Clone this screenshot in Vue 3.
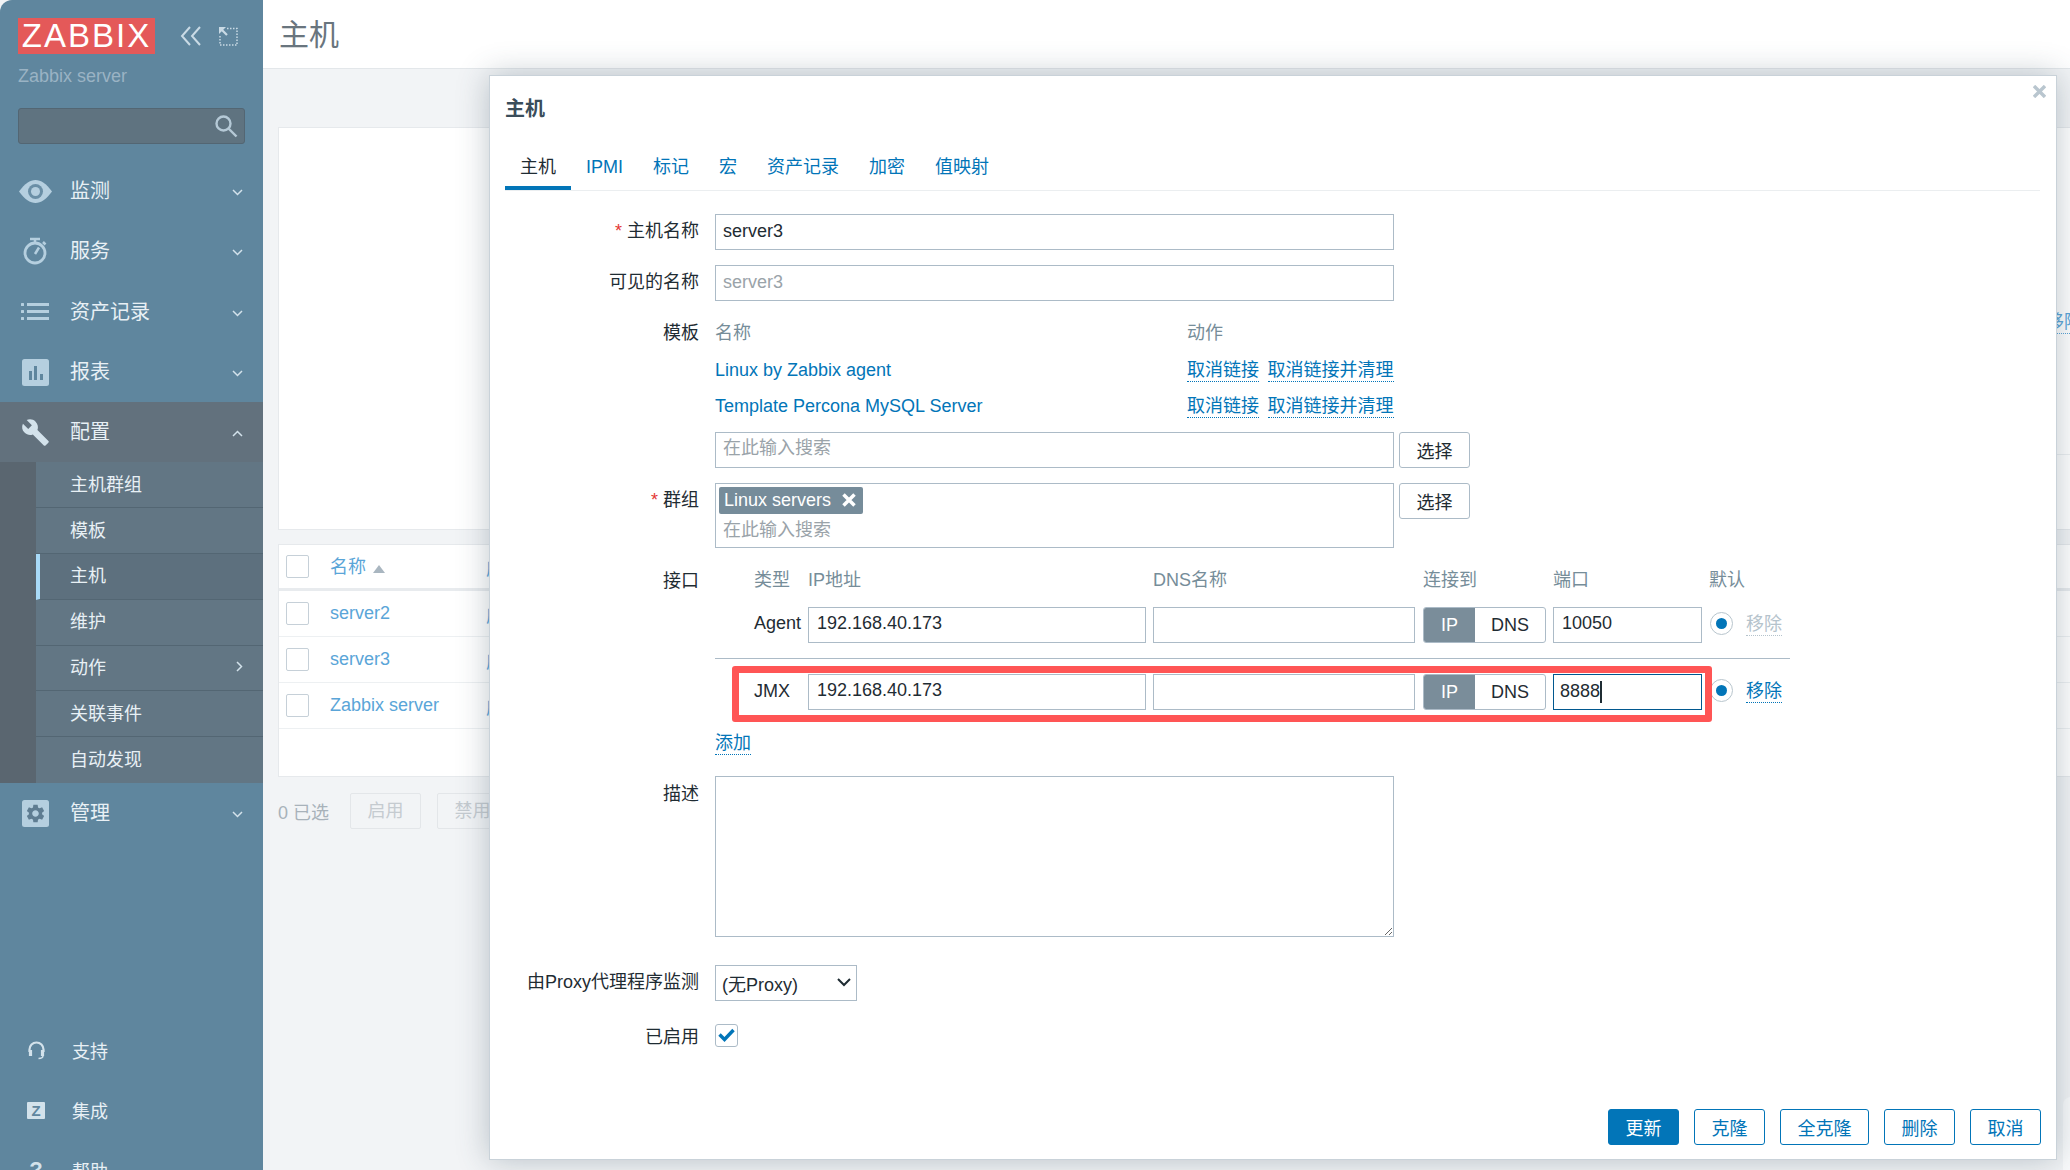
<script setup>
const menu = [
  { name: '监测', icon: 'eye' },
  { name: '服务', icon: 'watch' },
  { name: '资产记录', icon: 'list' },
  { name: '报表', icon: 'bars' },
  { name: '配置', icon: 'wrench', open: true },
]
const subMenu = [
  { name: '主机群组' },
  { name: '模板' },
  { name: '主机', active: true },
  { name: '维护' },
  { name: '动作', more: true },
  { name: '关联事件' },
  { name: '自动发现' },
]
const tabs = ['主机', 'IPMI', '标记', '宏', '资产记录', '加密', '值映射']
const hosts = ['server2', 'server3', 'Zabbix server']
const templates = ['Linux by Zabbix agent', 'Template Percona MySQL Server']
const gearPath = 'M19.14 12.94c.04-.3.06-.61.06-.94 0-.32-.02-.64-.07-.94l2.03-1.58c.18-.14.23-.41.12-.61l-1.92-3.32c-.12-.22-.37-.29-.59-.22l-2.39.96c-.5-.38-1.03-.7-1.62-.94l-.36-2.54c-.04-.24-.24-.41-.48-.41h-3.84c-.24 0-.43.17-.47.41l-.36 2.54c-.59.24-1.13.57-1.62.94l-2.39-.96c-.22-.08-.47 0-.59.22L2.74 8.87c-.12.21-.08.47.12.61l2.03 1.58c-.05.3-.09.63-.09.94s.02.64.07.94l-2.03 1.58c-.18.14-.23.41-.12.61l1.92 3.32c.12.22.37.29.59.22l2.39-.96c.5.38 1.03.7 1.62.94l.36 2.54c.05.24.24.41.48.41h3.84c.24 0 .44-.17.47-.41l.36-2.54c.59-.24 1.13-.56 1.62-.94l2.39.96c.22.08.47 0 .59-.22l1.92-3.32c.12-.22.07-.47-.12-.61l-2.01-1.58zM12 15.6c-1.98 0-3.6-1.62-3.6-3.6s1.62-3.6 3.6-3.6 3.6 1.62 3.6 3.6-1.62 3.6-3.6 3.6z'
const wrenchPath = 'M22.7 19l-9.1-9.1c.9-2.3.4-5-1.5-6.9-2-2-5-2.4-7.4-1.3L9 6 6 9 1.6 4.7C.4 7.1.9 10.1 2.9 12.1c1.9 1.9 4.6 2.4 6.9 1.5l9.1 9.1c.4.4 1 .4 1.4 0l2.3-2.3c.5-.4.5-1.1.1-1.4z'
</script>

<template>
  <div class="page">
    <aside class="sidebar">
      <div class="brand">
        <div class="logo">ZABBIX</div>
        <svg class="brand-icon first" width="22" height="20" viewBox="0 0 22 20" fill="none" stroke="#c9dae5" stroke-width="2">
          <path d="M10 1 2 10l8 9M20 1l-8 9 8 9" />
        </svg>
        <svg class="brand-icon" width="19" height="19" viewBox="0 0 19 19" fill="none" stroke="#c9dae5">
          <path d="M8 1.500h10v16.500H1V9" stroke-width="1.500" stroke-dasharray="1.500 1.500" />
          <path d="M0 0h7L0 7z" fill="#c9dae5" stroke="none" />
          <path d="M2 2l6 6" stroke-width="2.200" />
        </svg>
      </div>
      <div class="server">Zabbix server</div>
      <div class="search">
        <svg width="24" height="24" viewBox="0 0 24 24" fill="none" stroke="#b5c9d6" stroke-width="2.400">
          <circle cx="9.500" cy="9.500" r="7" />
          <path d="M14.500 14.500 22.500 22.500" />
        </svg>
      </div>

      <nav class="menu">
        <template v-for="item in menu" :key="item.name">
          <div class="menu-row" :class="{ open: item.open }">
            <span class="menu-icon">
              <svg v-if="item.icon === 'eye'" width="33" height="23" viewBox="0 0 33 23">
                <path d="M0 11.500C6 3.500 11 0 16.500 0S27 3.500 33 11.500C27 19.500 22 23 16.500 23S6 19.500 0 11.500z" fill="#b5cfdf" />
                <circle cx="16.500" cy="11.500" r="7.500" fill="#6a8fa6" />
                <circle cx="16.500" cy="11.500" r="4.500" fill="#b5cfdf" />
              </svg>
              <svg v-else-if="item.icon === 'watch'" width="24" height="28" viewBox="0 0 24 28" fill="none" stroke="#b5cfdf">
                <path d="M7 2h10M12 2v4" stroke-width="2.500" />
                <circle cx="12" cy="16" r="10" stroke-width="2.800" />
                <path d="M12 17l4-6.500M20 5l2.500 2.500" stroke-width="2.500" />
              </svg>
              <svg v-else-if="item.icon === 'list'" width="28" height="17" viewBox="0 0 28 17" fill="#b5cfdf">
                <rect width="3" height="3" rx=".5" />
                <rect y="7" width="3" height="3" rx=".5" />
                <rect y="14" width="3" height="3" rx=".5" />
                <rect x="6" width="22" height="3" />
                <rect x="6" y="7" width="22" height="3" />
                <rect x="6" y="14" width="22" height="3" />
              </svg>
              <svg v-else-if="item.icon === 'bars'" width="27" height="27" viewBox="0 0 27 27">
                <rect width="27" height="27" rx="2.500" fill="#b5cfdf" />
                <path d="M7 12h3v9H7zM12 7h3v14h-3zM18 15h3v6h-3z" fill="#5f869e" />
              </svg>
              <svg v-else width="29" height="29" viewBox="0 0 24 24" fill="#d3e2eb">
                <path :d="wrenchPath" />
              </svg>
            </span>
            <span class="menu-name">{{ item.name }}</span>
            <svg class="chevron" width="11" height="7" viewBox="0 0 11 7" fill="none" stroke="#d3e2eb" stroke-width="1.500">
              <path :d="item.open ? 'M1 6l4.500-4.500L10 6' : 'M1 1l4.500 4.500L10 1'" />
            </svg>
          </div>
        </template>
        <div class="sub-menu">
          <div class="sub-list">
            <div v-for="sub in subMenu" :key="sub.name" class="sub-row" :class="{ active: sub.active }">
              <span>{{ sub.name }}</span>
              <svg v-if="sub.more" width="7" height="11" viewBox="0 0 7 11" fill="none" stroke="#d3e2eb" stroke-width="1.500">
                <path d="M1 1l4.500 4.500L1 10" />
              </svg>
            </div>
          </div>
        </div>
        <div class="menu-row">
          <span class="menu-icon">
            <svg width="27" height="27" viewBox="0 0 27 27">
              <rect width="27" height="27" rx="2.500" fill="#b5cfdf" />
              <svg x="2.500" y="2.500" width="22" height="22" viewBox="0 0 24 24">
                <path :d="gearPath" fill="#5f7d92" />
              </svg>
            </svg>
          </span>
          <span class="menu-name">管理</span>
          <svg class="chevron" width="11" height="7" viewBox="0 0 11 7" fill="none" stroke="#d3e2eb" stroke-width="1.500">
            <path d="M1 1l4.500 4.500L10 1" />
          </svg>
        </div>
      </nav>

      <div class="foot">
        <div class="foot-row">
          <span class="menu-icon foot-icon">
            <svg width="17" height="19" viewBox="0 0 17 19" fill="none" stroke="#d3e2eb" stroke-width="2.200">
              <path d="M1.500 11V8.500a7 7 0 0 1 14 0V11" />
              <path d="M1.500 9.500h2v5h-2zM13.500 9.500h2v5h-2z" fill="#d3e2eb" stroke-width="1.200" />
              <path d="M15 14.500c0 2.500-2 3-4.500 3" stroke-width="1.500" />
            </svg>
          </span>
          <span>支持</span>
        </div>
        <div class="foot-row">
          <span class="menu-icon foot-icon"><span class="z-box">Z</span></span>
          <span>集成</span>
        </div>
        <div class="foot-row">
          <span class="menu-icon foot-icon help">?</span>
          <span>帮助</span>
        </div>
      </div>
    </aside>

    <main class="main">
      <header class="top-bar">主机</header>
      <div class="content">
        <section class="filter-panel">
          <a class="bg-link filter-link">移除</a>
          <div class="filter-line"></div>
        </section>
        <section class="table-panel">
          <div class="table-row table-head">
            <span class="box"></span>
            <span class="col-name">名称 <i class="sort"></i></span>
            <span class="col-next">应用集</span>
          </div>
          <div v-for="host in hosts" :key="host" class="table-row">
            <span class="box"></span>
            <span class="col-name">{{ host }}</span>
            <span class="col-next">应用集</span>
          </div>
        </section>
        <div class="mass-actions">
          <span class="selected">0 已选</span>
          <span class="mass-btn">启用</span>
          <span class="mass-btn">禁用</span>
        </div>
      </div>
    </main>

    <div class="corner-piece"></div>

    <section class="dialog">
      <svg class="close" width="13" height="13" viewBox="0 0 13 13" stroke="#b9c6cf" stroke-width="3.400">
        <path d="M1 1l11 11M12 1 1 12" />
      </svg>
      <h2 class="dialog-title">主机</h2>

      <div class="tabs">
        <span v-for="(tab, i) in tabs" :key="tab" class="tab" :class="{ current: i === 0 }">{{ tab }}</span>
      </div>

      <form class="form" @submit.prevent>
        <div class="row">
          <label><i>*</i> 主机名称</label>
          <input class="field wide" value="server3" />
        </div>
        <div class="row">
          <label>可见的名称</label>
          <input class="field wide" placeholder="server3" />
        </div>
        <div class="row">
          <label>模板</label>
          <div>
            <div class="tpl-row tpl-head">
              <span>名称</span>
              <span>动作</span>
            </div>
            <div v-for="tpl in templates" :key="tpl" class="tpl-row">
              <span class="plain-link">{{ tpl }}</span>
              <span class="tpl-actions">
                <a class="link">取消链接</a>
                <a class="link">取消链接并清理</a>
              </span>
            </div>
            <div class="with-btn tpl-search">
              <input class="field wide" placeholder="在此输入搜索" />
              <button type="button" class="plain-btn">选择</button>
            </div>
          </div>
        </div>
        <div class="row">
          <label><i>*</i> 群组</label>
          <div class="with-btn">
            <div class="multi">
              <span class="tag">Linux servers
                <svg width="14" height="14" viewBox="0 0 14 14" stroke="#fff" stroke-width="3.500">
                  <path d="M1.500 1.500l11 11M12.500 1.500l-11 11" />
                </svg>
              </span>
              <span class="multi-hint">在此输入搜索</span>
            </div>
            <button type="button" class="plain-btn">选择</button>
          </div>
        </div>
        <div class="row row-iface">
          <label>接口</label>
          <div>
            <div class="iface iface-head">
              <span>类型</span>
              <span>IP地址</span>
              <span>DNS名称</span>
              <span>连接到</span>
              <span>端口</span>
              <span>默认</span>
            </div>
            <div class="iface iface-agent">
              <span class="iface-type">Agent</span>
              <input class="field" value="192.168.40.173" />
              <input class="field" />
              <div class="toggle"><span class="on">IP</span><span>DNS</span></div>
              <input class="field" value="10050" />
              <span class="radio"></span>
              <a class="link muted">移除</a>
            </div>
            <div class="iface-line"></div>
            <div class="iface iface-jmx">
              <span class="iface-type">JMX</span>
              <input class="field" value="192.168.40.173" />
              <input class="field" />
              <div class="toggle"><span class="on">IP</span><span>DNS</span></div>
              <div class="field port-focus">8888<b class="caret"></b></div>
              <span class="radio"></span>
              <a class="link">移除</a>
              <div class="highlight"></div>
            </div>
            <a class="link add">添加</a>
          </div>
        </div>
        <div class="row row-desc">
          <label>描述</label>
          <textarea class="field wide area"></textarea>
        </div>
        <div class="row row-proxy">
          <label>由Proxy代理程序监测</label>
          <div class="proxy-wrap">
            <select class="proxy">
              <option>(无Proxy)</option>
            </select>
            <svg class="proxy-arrow" width="14" height="9" viewBox="0 0 14 9" fill="none" stroke="#1f2c33" stroke-width="2">
              <path d="M1 1l6 6 6-6" />
            </svg>
          </div>
        </div>
        <div class="row">
          <label class="label-check">已启用</label>
          <span class="check">
            <svg width="17" height="14" viewBox="0 0 17 14" fill="none" stroke="#0275b8" stroke-width="3.400">
              <path d="M1.500 6.500l5 5L15.500 2" />
            </svg>
          </span>
        </div>
      </form>

      <footer class="actions">
        <button type="button" class="act primary">更新</button>
        <button type="button" class="act">克隆</button>
        <button type="button" class="act act-long">全克隆</button>
        <button type="button" class="act">删除</button>
        <button type="button" class="act">取消</button>
      </footer>
    </section>
  </div>
</template>

<style>
html,
body {
  margin: 0;
  background: #fff;
}
</style>

<style scoped>
.page {
  position: relative;
  display: flex;
  width: 2070px;
  height: 1170px;
  overflow: hidden;
  font-family: "Liberation Sans", "Noto Sans CJK SC", sans-serif;
  font-size: 18px;
  color: #1f2c33;
  background: #f2f4f6;
}

/* sidebar */
.sidebar {
  flex: 0 0 263px;
  height: 1170px;
  overflow: hidden;
  background: #5f869e;
  border-top-left-radius: 12px;
  color: #e8f0f5;
}

.brand {
  display: flex;
  align-items: center;
  padding: 18px 0 0 18px;
  height: 36px;
}

.logo {
  width: 137px;
  height: 36px;
  background: #e45959;
  color: #fff;
  font-size: 33px;
  line-height: 36px;
  text-align: center;
  letter-spacing: 2px;
}

.brand-icon {
  margin-left: 17px;
}

.brand-icon.first {
  margin-left: 25px;
}

.server {
  padding: 10px 0 0 18px;
  height: 24px;
  line-height: 24px;
  color: #9ab3c4;
}

.search {
  box-sizing: border-box;
  display: flex;
  align-items: center;
  justify-content: flex-end;
  margin: 20px 18px 0;
  height: 36px;
  padding-right: 6px;
  background: #5f7380;
  border: 1px solid #536673;
  border-radius: 3px;
}

.menu {
  margin-top: 17px;
}

.menu-row {
  display: flex;
  align-items: center;
  height: 60.300px;
  font-size: 20px;
}

.menu-row.open {
  background: #62717d;
}

.menu-icon {
  flex: 0 0 70px;
  display: flex;
  align-items: center;
  justify-content: center;
  padding-right: 0;
  box-sizing: border-box;
}

.foot-icon {
  flex-basis: 72px;
}

.menu-name {
  flex: 1;
  line-height: 24px;
}

.chevron {
  margin: 3px 20px 0 0;
}

.sub-menu {
  padding-left: 36px;
  background: #5a6670;
}

.sub-list {
  background: #627684;
}

.sub-row {
  box-sizing: border-box;
  display: flex;
  align-items: center;
  justify-content: space-between;
  height: 45.800px;
  padding: 0 20px 4px 34px;
  border-bottom: 1px solid #536673;
}

.sub-row:last-child {
  border-bottom: 0;
}

.sub-row.active {
  background: #5d707e;
  padding-left: 30px;
  border-left: 4px solid #a8daf8;
}

.foot {
  margin-top: 177px;
}

.foot-row {
  display: flex;
  align-items: center;
  height: 60px;
}

.z-box {
  width: 18px;
  height: 17px;
  border-radius: 1px;
  background: #d3e2eb;
  color: #5f869e;
  font-size: 15px;
  font-weight: bold;
  line-height: 17px;
  text-align: center;
}

.help {
  font-size: 22px;
  font-weight: bold;
  color: #d3e2eb;
}

/* page behind the dialog */
.main {
  flex: 1;
  min-width: 0;
}

.top-bar {
  box-sizing: border-box;
  height: 69px;
  padding: 0 16px;
  background: #fff;
  border-bottom: 1px solid #e3e7ea;
  font-size: 30px;
  line-height: 70px;
  color: #69757e;
}

.content {
  padding: 58px 0 0 15px;
  width: 1900px;
}

.filter-panel {
  box-sizing: border-box;
  height: 403px;
  padding: 183px 0 0 1767px;
  background: #fff;
  border: 1px solid #e6e9ec;
}

.bg-link,
.col-name,
.col-next {
  color: #5aa5d8;
}

.filter-link {
  display: inline-block;
  line-height: 22px;
  border-bottom: 1px dotted #5aa5d8;
}

/* only its end shows to the right of the dialog */
.filter-line {
  margin: 120px 0 0 0;
  border-top: 1px solid #eceff1;
}

.table-panel {
  box-sizing: border-box;
  height: 233px;
  margin-top: 14px;
  background: #fff;
  border: 1px solid #e6e9ec;
}

.table-row {
  box-sizing: border-box;
  display: flex;
  align-items: center;
  height: 46px;
  padding-left: 7px;
  border-bottom: 1px solid #edf0f2;
}

.table-head {
  height: 46px;
  border-bottom: 3px solid #e8ebee;
}

.table-head .col-name {
  margin-top: -3px;
}

.box {
  box-sizing: border-box;
  flex: 0 0 23px;
  height: 23px;
  background: #fff;
  border: 1px solid #c6d0d8;
  border-radius: 2px;
}

.col-name {
  flex: 0 0 156px;
  margin-left: 21px;
}

.col-next {
  white-space: nowrap;
}

.sort {
  display: inline-block;
  margin-left: 2px;
  border: 6px solid transparent;
  border-top: 0;
  border-bottom: 8px solid #a9b6c0;
}

.mass-actions {
  display: flex;
  align-items: center;
  gap: 16px;
  margin-top: 16px;
  color: #a8b2ba;
}

.selected {
  width: 56px;
}

.mass-btn {
  box-sizing: border-box;
  width: 71px;
  height: 36px;
  line-height: 34px;
  text-align: center;
  color: #c5cbd0;
  border: 1px solid #e3e6e9;
  border-radius: 2px;
}

.corner-piece {
  position: absolute;
  left: 2063px;
  top: 1097px;
  width: 20px;
  height: 80px;
  background: #fafbfc;
  border-top-left-radius: 8px;
}

/* dialog */
.dialog {
  position: absolute;
  left: 489px;
  top: 75px;
  box-sizing: border-box;
  display: flex;
  flex-direction: column;
  width: 1568px;
  height: 1085px;
  background: #fff;
  border: 1px solid #c9d2d9;
  box-shadow: 0 0 30px rgba(60, 80, 95, 0.32);
}

.close {
  position: absolute;
  right: 10px;
  top: 9px;
}

.dialog-title {
  margin: 0;
  height: 64px;
  padding-left: 15px;
  font-size: 20px;
  font-weight: bold;
  line-height: 66px;
  color: #3a4d5a;
}

.tabs {
  display: flex;
  margin: 0 16px 0 15px;
  border-bottom: 1px solid #ebeef0;
}

.tab {
  box-sizing: border-box;
  height: 50px;
  padding: 15px 15px 0;
  line-height: 24px;
  color: #0275b8;
}

.tab.current {
  color: #1f2c33;
  border-bottom: 4px solid #0275b8;
}

.form {
  padding-top: 23px;
}

.row {
  display: grid;
  grid-template-columns: 209px 1fr;
  column-gap: 16px;
  margin-bottom: 15px;
}

.row > label {
  text-align: right;
  line-height: 34px;
  color: #1f2c33;
  white-space: nowrap;
}

.row > label i {
  font-style: normal;
  color: #e33734;
}

.field {
  box-sizing: border-box;
  width: 100%;
  height: 36px;
  padding: 0 7px 2px;
  background: #fff;
  border: 1px solid #acbbc7;
  border-radius: 0;
  outline: 0;
  font: inherit;
  color: #1f2c33;
}

.field.wide {
  display: block;
  width: 679px;
}

.field::placeholder,
.multi-hint {
  color: #9aa3a9;
  opacity: 1;
}

.tpl-row {
  display: grid;
  grid-template-columns: 472px 1fr;
  align-items: center;
  width: 679px;
  height: 35.800px;
}

.tpl-head {
  align-items: start;
  height: 37px;
  line-height: 35px;
  color: #768d99;
}

.plain-link {
  color: #0275b8;
}

.tpl-actions {
  display: flex;
  gap: 8.500px;
}

.link {
  display: inline-block;
  line-height: 22px;
  color: #0275b8;
  border-bottom: 1px dotted #0275b8;
}

.link.muted {
  color: #b5c3cc;
  border-bottom-color: #b5c3cc;
}

.with-btn {
  display: flex;
  align-items: flex-start;
  gap: 5px;
}

.tpl-search {
  margin-top: 7px;
}

.plain-btn {
  box-sizing: border-box;
  width: 71px;
  height: 36px;
  padding: 0;
  background: #fff;
  border: 1px solid #acbbc7;
  border-radius: 3px;
  font: inherit;
  color: #1f2c33;
}

.multi {
  box-sizing: border-box;
  display: flex;
  flex-direction: column;
  align-items: flex-start;
  width: 679px;
  height: 65px;
  padding: 3px;
  border: 1px solid #acbbc7;
}

.tag {
  box-sizing: border-box;
  display: flex;
  align-items: center;
  gap: 11px;
  width: 144px;
  height: 27px;
  padding-left: 5px;
  background: #768c9a;
  border-radius: 2px;
  color: #fff;
}

.multi-hint {
  padding: 4px 4px 0;
  line-height: 24px;
}

.iface {
  display: grid;
  grid-template-columns: 47px 338px 262px 124px 149px 30px auto;
  column-gap: 7px;
  align-items: center;
  position: relative;
  padding-left: 39px;
  height: 36px;
}

.iface .field {
  padding-left: 8px;
}

.iface .toggle {
  margin-left: 1px;
}

.iface-head {
  align-items: start;
  margin-bottom: 8px;
  line-height: 34px;
  white-space: nowrap;
  color: #768d99;
}

.iface-head span:nth-child(4) {
  margin-left: 1px;
}

.iface-type {
  margin-top: -2px;
  white-space: nowrap;
}

.iface-jmx .iface-type {
  margin-top: 0;
}

.iface-line {
  width: 1075px;
  margin: 15px 0;
  border-top: 1px solid #acbbc7;
}

.toggle {
  display: flex;
  box-sizing: border-box;
  height: 36px;
  overflow: hidden;
  background: #fff;
  border: 1px solid #acbbc7;
  border-radius: 3px;
  line-height: 34px;
  text-align: center;
}

.toggle span {
  flex: 1;
}

.toggle .on {
  flex: 0 0 51px;
  background: #7a8d9a;
  color: #fff;
}

.radio {
  position: relative;
  box-sizing: border-box;
  width: 23px;
  height: 23px;
  margin: -3px 0 0 1px;
  background: #fff;
  border: 1px solid #b8c5cd;
  border-radius: 50%;
}

.radio::after {
  content: "";
  position: absolute;
  left: 5px;
  top: 5px;
  width: 11px;
  height: 11px;
  border-radius: 50%;
  background: #0275b8;
}

.iface .link {
  justify-self: start;
  margin-top: -1px;
  white-space: nowrap;
}

.iface .port-focus {
  display: flex;
  align-items: center;
  padding: 0 0 0 6px;
  border-color: #01588f;
}

.caret {
  width: 2px;
  height: 22px;
  background: #1f2c33;
}

.highlight {
  position: absolute;
  left: 17px;
  top: -8px;
  box-sizing: border-box;
  width: 980px;
  height: 56px;
  border: 7px solid #ff5555;
  border-radius: 3px;
  pointer-events: none;
}

.add {
  margin-top: 22px;
}

.row-iface {
  margin-bottom: 21px;
}

.row-desc {
  margin-bottom: 28px;
}

.row-iface > label,
.row-desc > label {
  padding-top: 1px;
}

.area {
  height: 161px;
  padding-top: 4px;
  resize: both;
}

.row-proxy {
  margin-bottom: 23px;
}

.proxy-wrap {
  position: relative;
  width: 142px;
  height: 36px;
}

.proxy {
  box-sizing: border-box;
  display: block;
  width: 142px;
  height: 36px;
  padding: 4px 0 0 6px;
  background: #fff;
  border: 1px solid #acbbc7;
  border-radius: 0;
  outline: 0;
  appearance: none;
  font: inherit;
  color: #1f2c33;
}

.proxy-arrow {
  position: absolute;
  right: 6px;
  top: 13px;
  pointer-events: none;
}

.label-check {
  line-height: 26px !important;
}

.check {
  box-sizing: border-box;
  display: flex;
  align-items: center;
  justify-content: center;
  width: 23px;
  height: 23px;
  border: 1px solid #acbbc7;
  border-radius: 3px;
}

.actions {
  display: flex;
  justify-content: flex-end;
  gap: 15px;
  margin-top: auto;
  padding: 0 15px 14px 0;
}

.act {
  box-sizing: border-box;
  width: 71px;
  height: 36px;
  padding: 0;
  background: #fff;
  border: 1px solid #0275b8;
  border-radius: 3px;
  font: inherit;
  color: #0275b8;
}

.act-long {
  width: 89px;
}

.act.primary {
  background: #0275b8;
  color: #fff;
}
</style>
